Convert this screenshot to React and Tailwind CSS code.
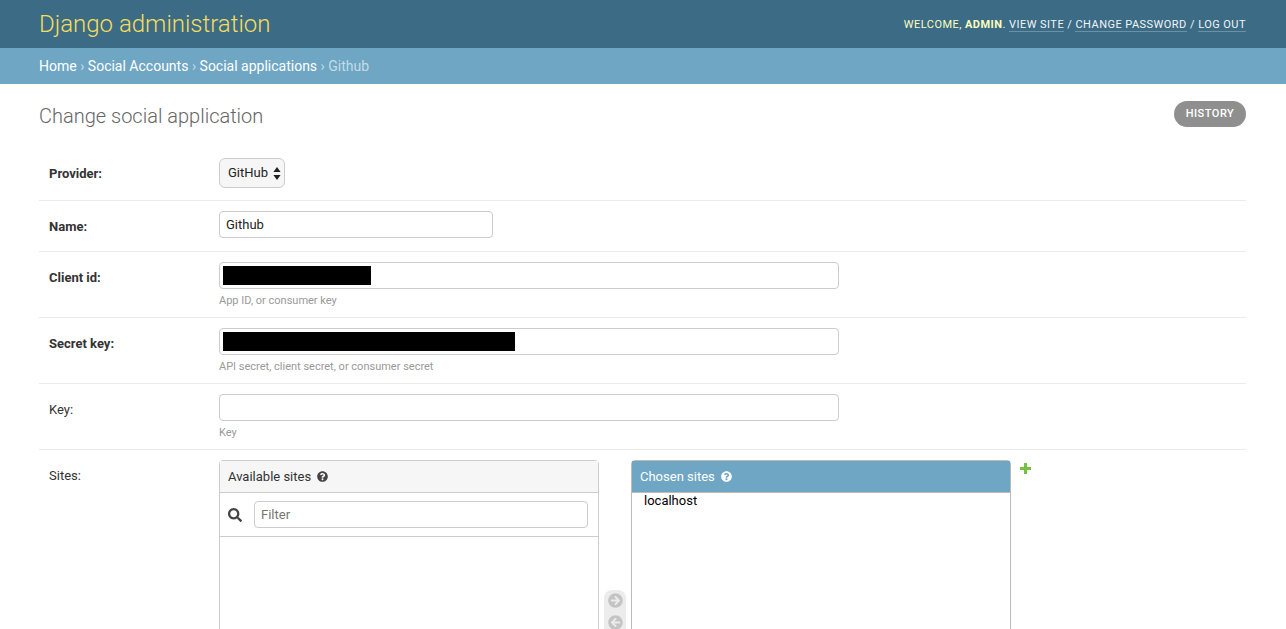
import React from 'react';
import { FaQuestionCircle, FaSearch, FaArrowCircleRight, FaArrowCircleLeft } from 'react-icons/fa';

function FormRow({ label, bold, help, children, className }) {
    return (
        <div className={`flex border-b border-[#eaeaea] pl-[10px] ${className}`}>
            <label className={`w-[170px] shrink-0 text-[13px] leading-[32px] text-[#333] ${bold ? 'font-bold' : ''}`}>{label}</label>
            <div className="flex flex-col">
                {children}
                {help && <p className="mt-[5px] text-[11px] leading-[14px] text-[#999]">{help}</p>}
            </div>
        </div>
    );
}

function RedactedInput({ width }) {
    return (
        <div className="relative h-[27px] w-[620px]">
            <input readOnly aria-label="redacted" className="block h-[27px] w-full rounded-[4px] border border-[#ccc] bg-white" />
            <div className={`absolute left-[4px] top-[4px] h-[19px] bg-black ${width}`}></div>
        </div>
    );
}

export default function App() {
    return (
        <div className="h-[629px] overflow-hidden bg-white font-['Roboto',sans-serif] text-[13px]">
            {/* header */}
            <header className="flex h-[48px] items-center justify-between bg-[#3c6b85] pl-[39px] pr-[40px]">
                <h1 className="text-[24px] font-light text-[#f5dd5d]">Django administration</h1>
                <div className="pt-[2px] text-[11px] uppercase tracking-[0.46px] text-[#fdfdbf]">
                    Welcome, <strong className="font-bold">admin</strong>.{' '}
                    <a className="border-b border-white/25 text-[#f2f5f7]">View site</a>
                    <span className="text-[#f2f5f7]"> / </span>
                    <a className="border-b border-white/25 text-[#f2f5f7]">Change password</a>
                    <span className="text-[#f2f5f7]"> / </span>
                    <a className="border-b border-white/25 text-[#f2f5f7]">Log out</a>
                </div>
            </header>

            {/* breadcrumbs */}
            <nav className="flex h-[36px] items-center bg-[#6ea6c3] pl-[39px] text-[14px] text-white">
                <a>Home</a>
                <span className="text-[#c4dce8]">&nbsp;›&nbsp;</span>
                <a>Social Accounts</a>
                <span className="text-[#c4dce8]">&nbsp;›&nbsp;</span>
                <a>Social applications</a>
                <span className="text-[#c4dce8]">&nbsp;›&nbsp;Github</span>
            </nav>

            <main className="pl-[39px] pr-[40px]">
                <div className="flex h-[63px] items-start justify-between">
                    <h2 className="mt-[20px] text-[20px] font-light leading-[24px] text-[#666]">Change social application</h2>
                    <a className="mt-[17px] flex h-[26px] w-[72px] items-center justify-center rounded-[13px] bg-[#8f8f8f] text-[11px] font-medium uppercase tracking-[0.5px] text-white">History</a>
                </div>

                <FormRow label="Provider:" bold className="h-[54px] pt-[11px]">
                    <div className="flex h-[30px] w-[66px] items-center justify-between rounded-[6px] border border-[#ccc] bg-[#f6f6f6] pl-[8px] pr-[3px] text-[13px] text-[#222]">
                        GitHub
                        <svg width="8" height="13" viewBox="0 0 8 13" fill="#222">
                            <path d="M4 0 L7.6 5 H0.4 Z M4 13 L0.4 8 H7.6 Z" />
                        </svg>
                    </div>
                </FormRow>

                <FormRow label="Name:" bold className="h-[51px] pt-[10px]">
                    <input readOnly value="Github" aria-label="Name" className="block h-[27px] w-[274px] rounded-[4px] border border-[#ccc] px-[6px] text-[13px] text-[#222]" />
                </FormRow>

                <FormRow label="Client id:" bold help="App ID, or consumer key" className="h-[66px] pt-[10px]">
                    <RedactedInput width="w-[148px]" />
                </FormRow>

                <FormRow label="Secret key:" bold help="API secret, client secret, or consumer secret" className="h-[66px] pt-[10px]">
                    <RedactedInput width="w-[292px]" />
                </FormRow>

                <FormRow label="Key:" help="Key" className="h-[66px] pt-[10px]">
                    <input readOnly aria-label="Key" className="block h-[27px] w-[620px] rounded-[4px] border border-[#ccc]" />
                </FormRow>

                {/* sites selector */}
                <div className="flex pl-[10px] pt-[10px]">
                    <label className="w-[170px] shrink-0 leading-[32px] text-[#333]">Sites:</label>
                    <div className="flex items-start">
                        <div className="h-[300px] w-[380px] rounded-t-[4px] border border-[#ccc]">
                            <div className="flex h-[32px] items-center gap-[6px] border-b border-[#ccc] bg-[#f6f6f6] px-[8px] text-[#333]">
                                Available sites
                                <FaQuestionCircle className="text-[11px] text-[#444]" />
                            </div>
                            <div className="flex h-[44px] items-center border-b border-[#ccc] pl-[8px] pr-[10px]">
                                <FaSearch className="mr-[12px] text-[14px] text-[#444]" />
                                <input readOnly placeholder="Filter" className="h-[27px] flex-1 rounded-[4px] border border-[#ccc] px-[6px] text-[13px] placeholder:text-[#757575]" />
                            </div>
                        </div>

                        <div className="mx-[5px] mt-[130px] flex h-[60px] w-[22px] flex-col items-center gap-[7px] rounded-[8px] bg-[#ececec] pt-[3px] text-[15px] text-[#c4c4c4]">
                            <FaArrowCircleRight />
                            <FaArrowCircleLeft />
                        </div>

                        <div className="h-[300px] w-[380px] rounded-t-[4px] border border-[#bbb]">
                            <div className="flex h-[32px] items-center gap-[6px] border-b border-[#bbb] bg-[#6ea6c3] px-[8px] text-white">
                                Chosen sites
                                <FaQuestionCircle className="text-[11px]" />
                            </div>
                            <div className="pl-[12px] text-[13px] leading-[16px] text-black">localhost</div>
                        </div>

                        <svg className="ml-[9px] mt-[3px]" width="11" height="11" viewBox="0 0 11 11" fill="#76c043">
                            <path d="M4 0 H7 V4 H11 V7 H7 V11 H4 V7 H0 V4 H4 Z" />
                        </svg>
                    </div>
                </div>
            </main>
        </div>
    );
}
